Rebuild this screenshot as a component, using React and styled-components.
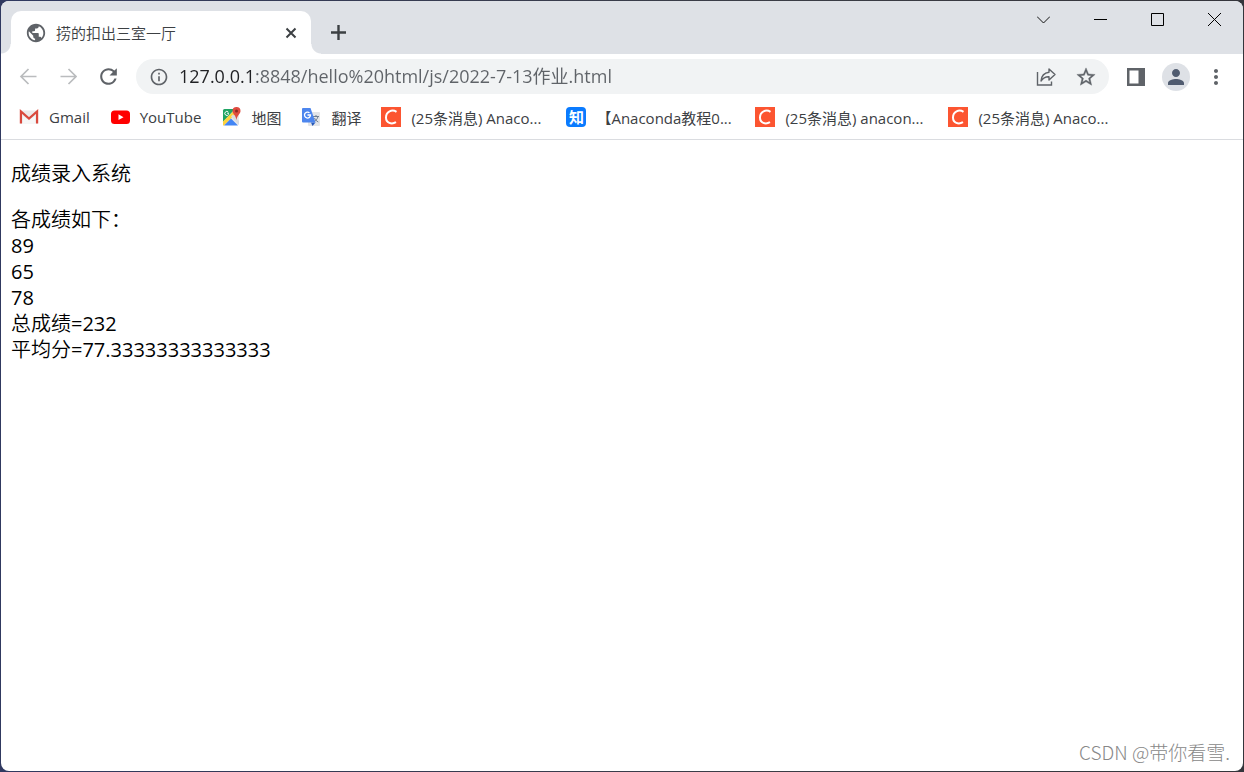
import React from "react";
import styled, { createGlobalStyle } from "styled-components";
import {
  MdPublic,
  MdRefresh,
  MdInfoOutline,
  MdStarOutline,
  MdPerson,
  MdMoreVert,
} from "react-icons/md";

const scores = [89, 65, 78];
const total = scores.reduce((sum, score) => sum + score, 0);

const bookmarks = [
  { icon: "gmail", label: "Gmail" },
  { icon: "youtube", label: "YouTube" },
  { icon: "maps", label: "地图" },
  { icon: "translate", label: "翻译" },
  { icon: "csdn", label: "(25条消息) Anaco...", width: 135 },
  { icon: "zhihu", label: "【Anaconda教程0...", width: 139 },
  { icon: "csdn", label: "(25条消息) anacon...", width: 143 },
  { icon: "csdn", label: "(25条消息) Anaco...", width: 135 },
];

const App = () => {
  return (
    <>
      <GlobalStyle />
      <Desktop>
        <BrowserWindow>
          <TabStrip>
            <Tab>
              <MdPublic size={22} color="#5f6368" />
              <TabTitle>捞的扣出三室一厅</TabTitle>
              <TabClose aria-label="关闭标签页">
                <svg width="12" height="12" viewBox="0 0 12 12">
                  <path d="M1.5 1.5l9 9M10.5 1.5l-9 9" stroke="#3c4043" strokeWidth="2" />
                </svg>
              </TabClose>
            </Tab>
            <NewTab aria-label="新标签页">
              <svg width="15" height="15" viewBox="0 0 15 15">
                <path d="M7.5 0v15M0 7.5h15" stroke="#3c4043" strokeWidth="2.4" />
              </svg>
            </NewTab>
            <WindowControls>
              <WindowButton aria-label="搜索标签页">
                <svg width="13" height="13" viewBox="0 0 13 13">
                  <path d="M0 3.5l6.5 6.5L13 3.5" fill="none" stroke="#111" />
                </svg>
              </WindowButton>
              <WindowButton aria-label="最小化">
                <svg width="13" height="13" viewBox="0 0 13 13">
                  <path d="M0 6.5h13" stroke="#000" />
                </svg>
              </WindowButton>
              <WindowButton aria-label="最大化">
                <svg width="13" height="13" viewBox="0 0 13 13">
                  <path d="M.5.5h12v12H.5z" fill="none" stroke="#000" />
                </svg>
              </WindowButton>
              <WindowButton aria-label="关闭">
                <svg width="13" height="13" viewBox="0 0 13 13">
                  <path d="M0 0l13 13M13 0L0 13" stroke="#000" />
                </svg>
              </WindowButton>
            </WindowControls>
          </TabStrip>

          <Toolbar>
            <ToolButton aria-label="后退">
              <svg width="18" height="18" viewBox="0 0 18 18">
                <path d="M17.5 8.5h-15M9.5 1L2 8.5 9.5 16" fill="none" stroke="#babcbe" strokeWidth="1.7" />
              </svg>
            </ToolButton>
            <ToolButton aria-label="前进">
              <svg width="18" height="18" viewBox="0 0 18 18">
                <path d="M1.5 8.5h15M9.5 1L17 8.5 9.5 16" fill="none" stroke="#babcbe" strokeWidth="1.7" />
              </svg>
            </ToolButton>
            <ToolButton aria-label="重新加载">
              <MdRefresh size={25} />
            </ToolButton>
            <AddressBar>
              <BarButton aria-label="查看网站信息">
                <MdInfoOutline size={20} />
              </BarButton>
              <Address
                aria-label="地址"
                defaultValue="127.0.0.1:8848/hello%20html/js/2022-7-13作业.html"
              />
              <BarButton aria-label="分享">
                <svg width="20" height="20" viewBox="0 0 20 20" fill="none" stroke="#5f6368" strokeWidth="1.4">
                  <path d="M1.5 5v13h14v-3.5" />
                  <path d="M13 2l6 5.5-6 5.5V9.8C9.5 9.6 7 11 5 14c.4-4.500 3-8.300 8-8.800z" strokeLinejoin="round" />
                </svg>
              </BarButton>
              <BarButton aria-label="为此页添加书签">
                <MdStarOutline size={22} stroke="#5f6368" strokeWidth="0.4" />
              </BarButton>
            </AddressBar>
            <ToolButton aria-label="侧边栏">
              <svg width="18" height="18" viewBox="0 0 18 18">
                <path d="M0 0h18v18H0zM2.5 2.5v13h9v-13z" fill="#5f6368" fillRule="evenodd" />
              </svg>
            </ToolButton>
            <Avatar aria-label="用户">
              <MdPerson size={24} />
            </Avatar>
            <ToolButton aria-label="更多">
              <MdMoreVert size={24} />
            </ToolButton>
          </Toolbar>

          <BookmarkBar>
            {bookmarks.map((bookmark, index) => (
              <Bookmark href="#" key={index}>
                <BookmarkIcon name={bookmark.icon} />
                <BookmarkLabel $width={bookmark.width}>{bookmark.label}</BookmarkLabel>
              </Bookmark>
            ))}
          </BookmarkBar>

          <Page>
            <p>成绩录入系统</p>
            <p>
              各成绩如下：
              <br />
              {scores.map((score) => (
                <React.Fragment key={score}>
                  <Score>{score}</Score>
                  <br />
                </React.Fragment>
              ))}
              总成绩<Score>={total}</Score>
              <br />
              平均分<Score>=77.33333333333333</Score>
            </p>
          </Page>
          <Watermark>CSDN @带你看雪.</Watermark>
        </BrowserWindow>
      </Desktop>
    </>
  );
};

export default App;

const BookmarkIcon = ({ name }) => {
  if (name === "gmail") {
    return (
      <svg width="20" height="20" viewBox="0 0 20 20">
        <path d="M1 3.5h18v13H1z" fill="#eceaea" />
        <path d="M4 9l6 4.500L16 9v7.500H4z" fill="#f7f7f7" />
        <path d="M1.900 16.500V4.500L10 11.500l8.100-7v12" fill="none" stroke="#d9493d" strokeWidth="2.2" />
      </svg>
    );
  }
  if (name === "youtube") {
    return (
      <svg width="20" height="20" viewBox="0 0 20 20">
        <rect x="1" y="3.5" width="19" height="13.5" rx="3.5" fill="#f00" />
        <path d="M8.500 7.300v5.800l5-2.900z" fill="#fff" />
      </svg>
    );
  }
  if (name === "maps") {
    return (
      <svg width="20" height="20" viewBox="0 0 20 20">
        <rect x="2" y="2" width="16" height="16" rx="1.5" fill="#e8eaed" />
        <path d="M3.500 2H14L2 15V3.500Q2 2 3.500 2z" fill="#1fa463" />
        <path d="M2 14.500L13.500 3l2.500 2.500L3 18.500H2z" fill="#fdd23e" />
        <path d="M3 18.500l7-7 7 7z" fill="#4285f4" />
        <path d="M10 9.500l2-2L18 14v4z" fill="#dadce0" />
        <path d="M8 6.300H6.200M7.600 7.400a2 2 0 1 1-.3-2.300" fill="none" stroke="#fff" />
        <path d="M15.500 0a4 4 0 0 1 4 4c0 2.800-3.300 4.300-4 9-.7-4.700-4-6.200-4-9a4 4 0 0 1 4-4z" fill="#df4b3f" />
        <circle cx="15.5" cy="4" r="1.5" fill="#8b2a22" />
      </svg>
    );
  }
  if (name === "translate") {
    return (
      <svg width="20" height="20" viewBox="0 0 20 20">
        <rect x="7" y="5" width="12" height="14" rx="1" fill="#e3e5e8" />
        <path d="M12 9.500h6M15 8v1.500M17 9.500c-.6 2.500-2.200 4.500-4.500 5.500M13.500 11c.8 1.800 2 3 3.800 4" fill="none" stroke="#6f7f91" />
        <path d="M10 15.500h4.500L11.500 19z" fill="#2859b8" />
        <path d="M2 1h7.500l5 14.500H2q-1 0-1-1V2q0-1 1-1z" fill="#4d86ee" />
        <path d="M6.500 8h3a3 3 0 1 1-1-2.200" fill="none" stroke="#fff" strokeWidth="1.3" />
      </svg>
    );
  }
  if (name === "zhihu") {
    return <ZhihuIcon>知</ZhihuIcon>;
  }
  return (
    <svg width="20" height="20" viewBox="0 0 20 20">
      <path d="M0 0h20v20H0z" fill="#fc5531" />
      <path d="M15.500 4.800C11 2 5 4.500 5 10.400c0 5.600 5.500 7.400 10 4.800" fill="none" stroke="#fff" strokeWidth="2" />
    </svg>
  );
};

const GlobalStyle = createGlobalStyle`
  * {
    box-sizing: border-box;
  }

  body {
    margin: 0;
    font-family: "Open Sans", "Noto Sans CJK SC", sans-serif;
  }

  button {
    display: flex;
    align-items: center;
    justify-content: center;
    padding: 0;
    border: none;
    background: none;
    color: #5f6368;
    cursor: pointer;
  }

  svg {
    display: block;
    flex-shrink: 0;
  }
`;

const Desktop = styled.div`
  display: flex;
  min-height: 100vh;
  padding: 1px;
  background: linear-gradient(to right, #303960, #3b3d46 60%, #34353b);
`;

const BrowserWindow = styled.div`
  position: relative;
  display: flex;
  flex-direction: column;
  flex: 1;
  min-width: 0;
  overflow: hidden;
  border-radius: 8px;
  background: #fff;
`;

const TabStrip = styled.div`
  display: flex;
  height: 53px;
  padding: 10px 0 0 10px;
  background: #dee1e6;
`;

const Tab = styled.div`
  position: relative;
  display: flex;
  align-items: center;
  width: 300px;
  padding: 0 14px;
  border-radius: 10px 10px 0 0;
  background: #fff;

  /* curved feet of the active tab */
  &::before,
  &::after {
    content: "";
    position: absolute;
    bottom: 0;
    width: 10px;
    height: 10px;
  }
  &::before {
    right: 100%;
    background: radial-gradient(circle at 0 0, transparent 9px, #fff 10px);
  }
  &::after {
    left: 100%;
    background: radial-gradient(circle at 100% 0, transparent 9px, #fff 10px);
  }
`;

const TabTitle = styled.span`
  flex: 1;
  margin-left: 9px;
  font-size: 15px;
  font-weight: 350;
  color: #3c4043;
`;

const TabClose = styled.button`
  width: 12px;
  height: 20px;
`;

const NewTab = styled.button`
  width: 35px;
  height: 43px;
  margin-left: 10px;
`;

const WindowControls = styled.div`
  display: flex;
  height: 37px;
  margin: -10px 0 0 auto;
`;

const WindowButton = styled.button`
  width: 57px;
`;

const Toolbar = styled.div`
  display: flex;
  align-items: center;
  height: 45px;
  padding: 0 7px;
`;

const ToolButton = styled.button`
  width: 40px;
  height: 36px;
`;

const AddressBar = styled.div`
  display: flex;
  align-items: center;
  flex: 1;
  min-width: 0;
  height: 35px;
  margin: 0 7px 0 8px;
  padding: 0 3px;
  border-radius: 18px;
  background: #f1f3f4;
`;

const BarButton = styled.button`
  width: 40px;
  height: 34px;
`;

/* host in dark, rest of the url in grey */
const Address = styled.input`
  flex: 1;
  min-width: 0;
  padding: 0 0 2px;
  border: none;
  outline: none;
  font-family: inherit;
  font-size: 18px;
  line-height: 24px;
  background: linear-gradient(to right, #202124 77px, #5f6368 77px);
  background-clip: text;
  color: transparent;
`;

const Avatar = styled.button`
  width: 28px;
  height: 28px;
  margin: 0 6px;
  border-radius: 50%;
  background: #dee1e6;
  color: #515c70;
`;

const BookmarkBar = styled.nav`
  display: flex;
  gap: 20px;
  height: 41px;
  padding: 0 18px 4px;
  border-bottom: 1px solid #dadce0;
`;

const Bookmark = styled.a`
  display: flex;
  align-items: center;
  gap: 10px;
  font-size: 15px;
  color: #3c4043;
  text-decoration: none;
  white-space: nowrap;
`;

const BookmarkLabel = styled.span`
  width: ${(props) => (props.$width ? `${props.$width}px` : "auto")};
`;

const ZhihuIcon = styled.span`
  width: 20px;
  height: 20px;
  border-radius: 4px;
  background: #0a7bff;
  color: #fff;
  font-size: 15px;
  font-weight: 700;
  line-height: 20px;
  text-align: center;
`;

const Page = styled.main`
  flex: 1;
  padding: 1px 10px 0;
  font-size: 20px;
  font-weight: 350;
  line-height: 26px;
  color: #000;

  p {
    margin: 20px 0;
  }
`;

const Score = styled.span`
  font-weight: 400;
`;

const Watermark = styled.div`
  position: absolute;
  right: 13px;
  bottom: 6px;
  font-family: "Noto Sans CJK SC", sans-serif;
  font-size: 19px;
  font-weight: 300;
  line-height: 26px;
  color: #888;
`;
